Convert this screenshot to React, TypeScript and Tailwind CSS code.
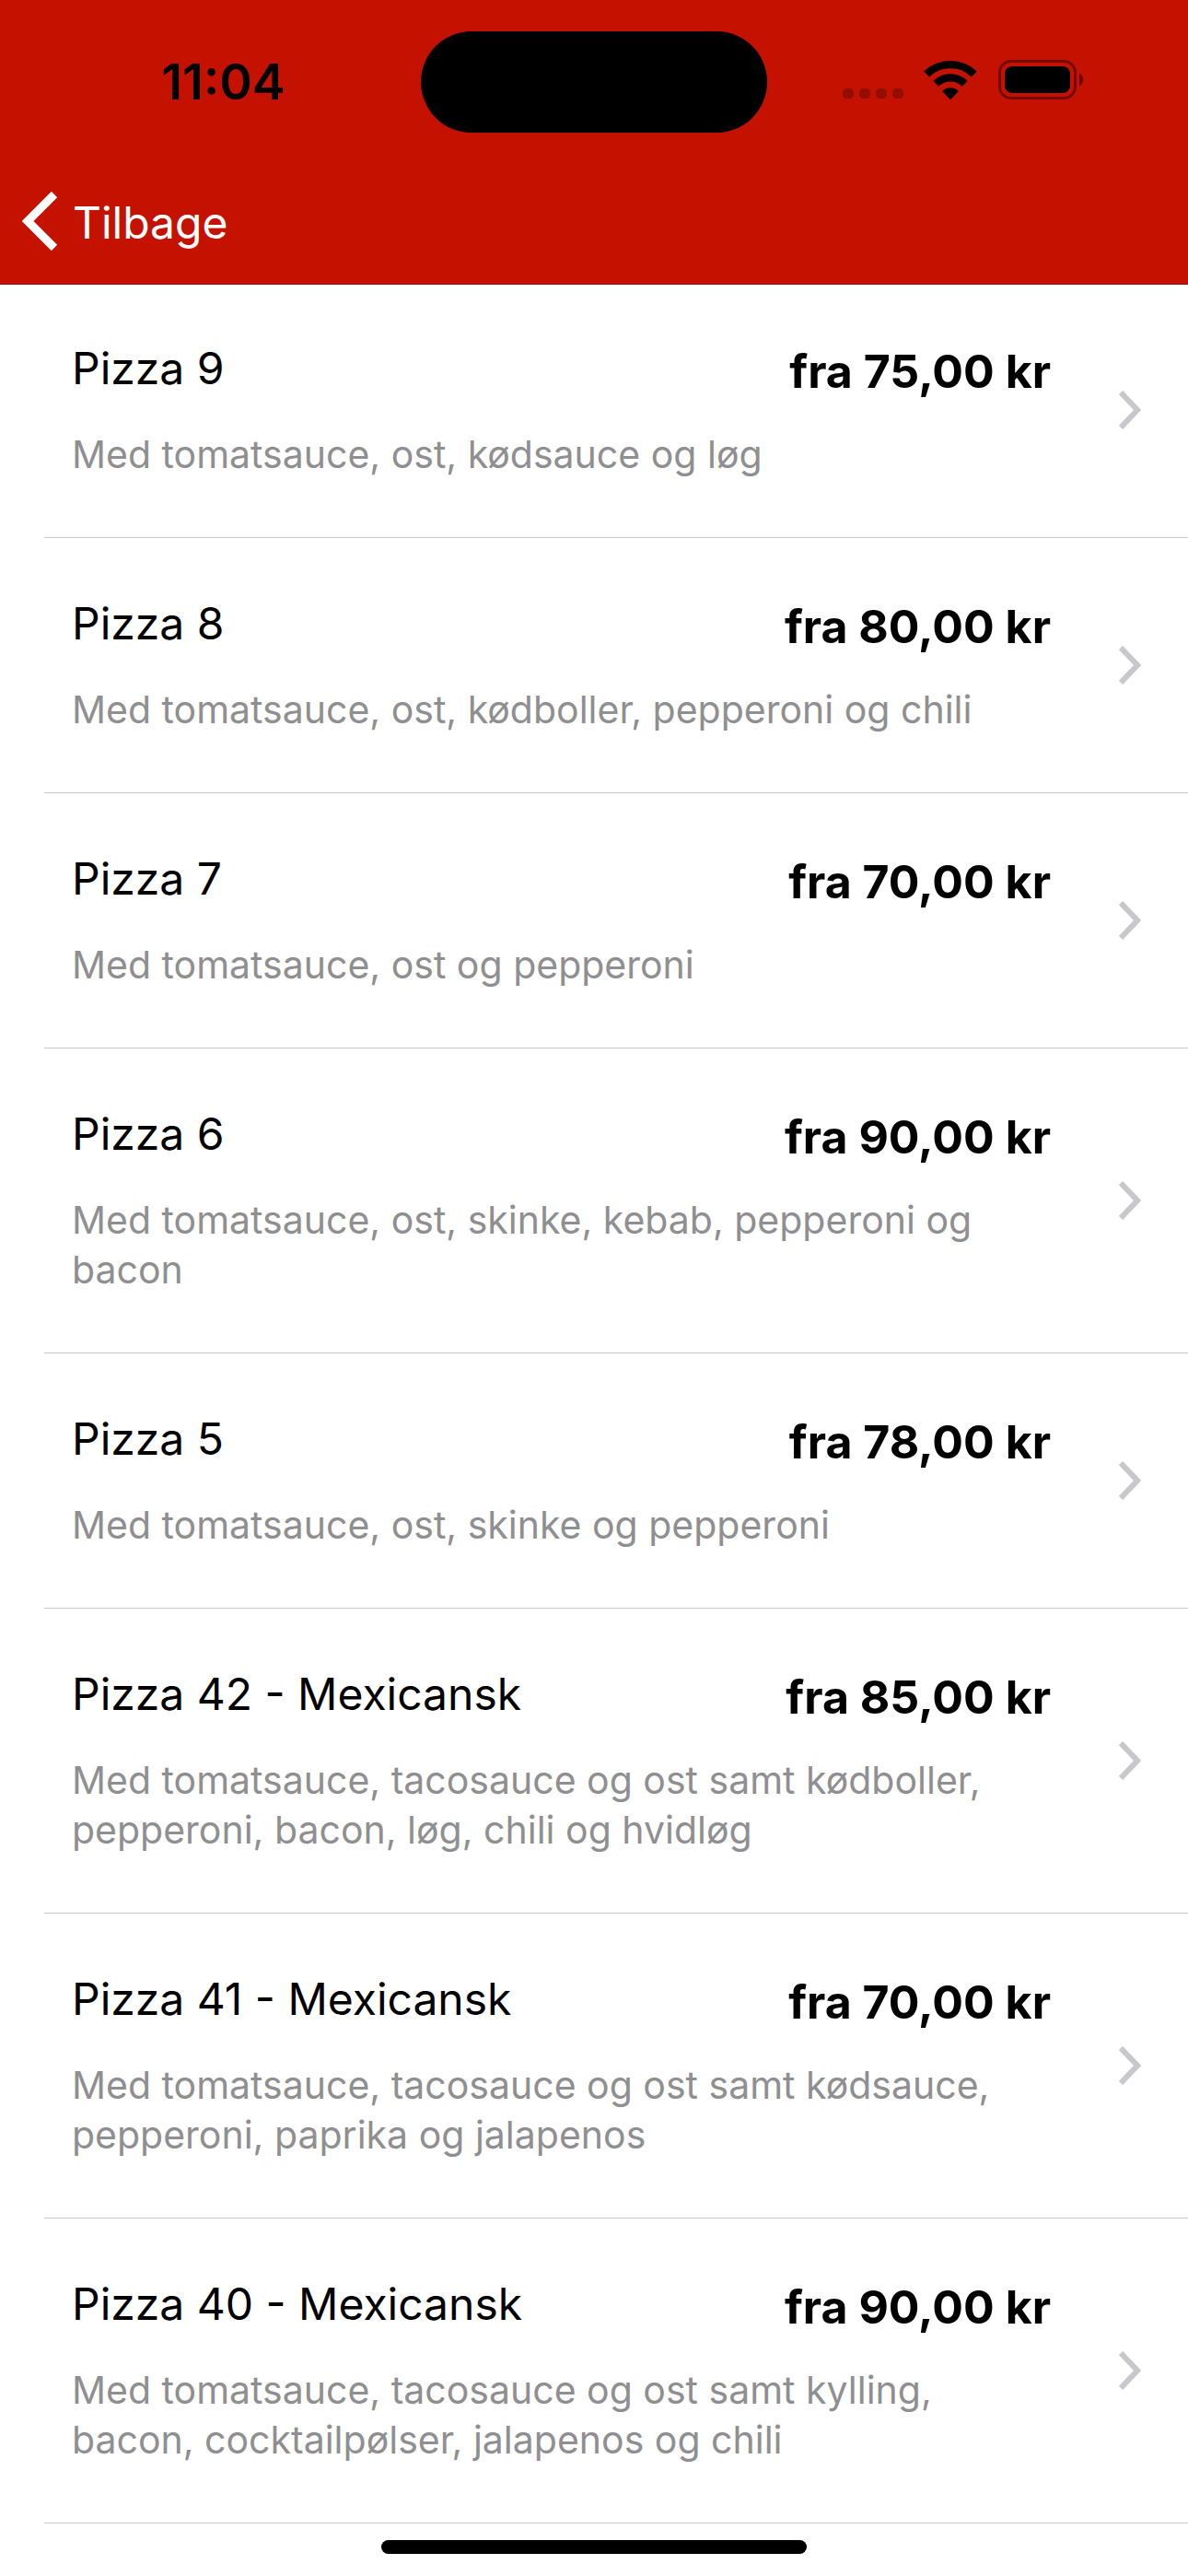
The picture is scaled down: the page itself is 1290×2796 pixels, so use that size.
import React from 'react'

type Pizza = {
  name: string
  price: string
  description: string
}

const pizzas: Pizza[] = [
  { name: 'Pizza 9', price: 'fra 75,00 kr', description: 'Med tomatsauce, ost, kødsauce og løg' },
  { name: 'Pizza 8', price: 'fra 80,00 kr', description: 'Med tomatsauce, ost, kødboller, pepperoni og chili' },
  { name: 'Pizza 7', price: 'fra 70,00 kr', description: 'Med tomatsauce, ost og pepperoni' },
  { name: 'Pizza 6', price: 'fra 90,00 kr', description: 'Med tomatsauce, ost, skinke, kebab, pepperoni og bacon' },
  { name: 'Pizza 5', price: 'fra 78,00 kr', description: 'Med tomatsauce, ost, skinke og pepperoni' },
  { name: 'Pizza 42 - Mexicansk', price: 'fra 85,00 kr', description: 'Med tomatsauce, tacosauce og ost samt kødboller, pepperoni, bacon, løg, chili og hvidløg' },
  { name: 'Pizza 41 - Mexicansk', price: 'fra 70,00 kr', description: 'Med tomatsauce, tacosauce og ost samt kødsauce, pepperoni, paprika og jalapenos' },
  { name: 'Pizza 40 - Mexicansk', price: 'fra 90,00 kr', description: 'Med tomatsauce, tacosauce og ost samt kylling, bacon, cocktailpølser, jalapenos og chili' },
]

const StatusBar = () => {
  return (
    <div className="grid grid-cols-[1fr_376px_1fr] items-center pt-[34px]">
      <span className="pl-7 text-center text-[54px] leading-[60px] font-semibold text-black">11:04</span>

      {/* Dynamic island */}
      <div className="h-[110px] rounded-full bg-black" />

      <div className="flex items-center pb-1 pl-[82px]">
        {/* Signal */}
        <svg width="66" height="44" viewBox="0 0 66 44" fill="#000" fillOpacity="0.25" aria-hidden="true">
          <rect x="0" y="31" width="12" height="11" rx="4.5" />
          <rect x="18" y="31" width="12" height="11" rx="4.5" />
          <rect x="36" y="31" width="12" height="11" rx="4.5" />
          <rect x="54" y="31" width="12" height="11" rx="4.5" />
        </svg>

        {/* Wifi */}
        <svg className="ml-[22px]" width="58" height="44" viewBox="0 0 58 44" aria-hidden="true">
          <g fill="none" stroke="#000" strokeWidth="8.4">
            <path d="M3.2 15.6 A37 37 0 0 1 54.8 15.6" />
            <path d="M13.4 25.8 A22.2 22.2 0 0 1 44.6 25.8" />
          </g>
          <path d="M20.6 33.4 A12.6 12.6 0 0 1 37.4 33.4 Q38 34 37.4 34.6 L29.7 42.4 Q29 43 28.3 42.4 L20.6 34.6 Q20 34 20.6 33.4 Z" fill="#000" />
        </svg>

        {/* Battery */}
        <svg className="ml-[23px]" width="94" height="44" viewBox="0 0 94 44" aria-hidden="true">
          <rect x="1.5" y="1.5" width="82" height="40" rx="12.5" fill="none" stroke="#000" strokeOpacity="0.4" strokeWidth="3" />
          <rect x="7" y="7" width="71" height="29" rx="8" fill="#000" />
          <path d="M88 14.5 A8 8 0 0 1 88 28.5 Z" fill="#000" fillOpacity="0.45" />
        </svg>
      </div>
    </div>
  )
}

const PizzaRow = ({ pizza }: { pizza: Pizza }) => {
  return (
    <li className="ml-12 border-b border-[#c6c6c8]">
      <a href="#" className="flex items-center py-[63px] pr-[51px] pl-[30px]">
        <div className="flex-1">
          <div className="flex items-start justify-between">
            <h2 className="text-[48px] leading-[60px] text-black">{pizza.name}</h2>
            <span className="text-[50px] leading-[66px] font-bold text-black">{pizza.price}</span>
          </div>
          <p className="mt-[30px] text-[41px] leading-[54px] text-[#8f8f91]">{pizza.description}</p>
        </div>

        <svg className="ml-[74px] shrink-0" width="24" height="42" viewBox="0 0 24 42" fill="none" stroke="#c7c7cc" strokeWidth="6" aria-hidden="true">
          <path d="M2 2 L20 21 L2 40" />
        </svg>
      </a>
    </li>
  )
}

const App = () => {
  return (
    <div className="flex min-h-screen flex-col bg-white font-['Inter',sans-serif]">
      <header className="border-b border-[#a50d00] bg-[#c51200]">
        <StatusBar />
        <nav className="flex h-[164px] items-center px-6 pt-[28px]">
          <button className="flex items-end gap-4 text-[48px] leading-[60px] text-white">
            <svg width="39" height="64" viewBox="0 0 39 64" fill="none" stroke="#fff" strokeWidth="9" aria-hidden="true">
              <path d="M35 3 L6 32 L35 61" />
            </svg>
            Tilbage
          </button>
        </nav>
      </header>

      {/* The first row starts slightly under the header */}
      <main className="-mt-0.5 grow">
        <ul>
          {pizzas.map((pizza) => (
            <PizzaRow key={pizza.name} pizza={pizza} />
          ))}
        </ul>
      </main>

      {/* Home indicator */}
      <footer className="flex justify-center pt-[18px] pb-6">
        <div className="h-[15px] w-[462px] rounded-full bg-black" />
      </footer>
    </div>
  )
}

export default App
